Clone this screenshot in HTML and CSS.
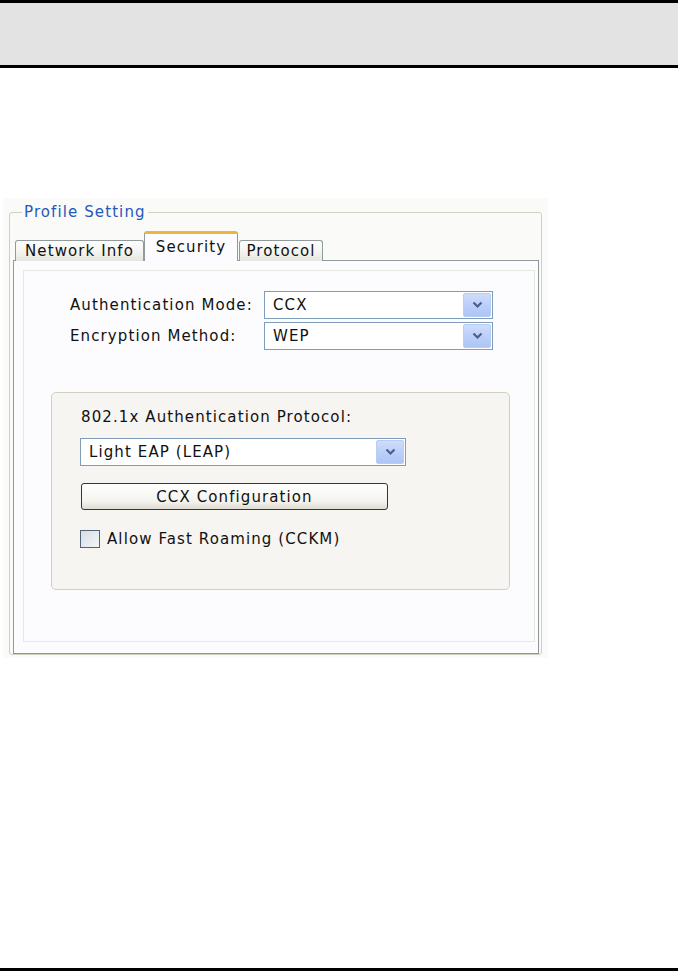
FILE: index.html
```html
<!DOCTYPE html>
<html>
<head>
<meta charset="utf-8">
<link rel="stylesheet" href="styles.css">
</head>
<body>
<div class="page">
  <div class="topbar"></div>
  <div class="shot">
    <div class="group">
      <div class="group-title">Profile Setting</div>
      <div class="tabs">
        <div class="tab tab-ni">Network Info</div>
        <div class="tab tab-sel">Security</div>
        <div class="tab tab-pr">Protocol</div>
      </div>
      <div class="panel">
        <div class="frame">
          <div class="form">
            <div class="label">Authentication Mode:</div>
            <div class="combo"><span class="combo-text">CCX</span><span class="arrow"><svg width="11" height="8" viewBox="0 0 11 8"><path d="M1.5 1.5 L5.5 5.5 L9.5 1.5" fill="none" stroke="#4a5f8c" stroke-width="2.2"/></svg></span></div>
            <div class="label">Encryption Method:</div>
            <div class="combo"><span class="combo-text">WEP</span><span class="arrow"><svg width="11" height="8" viewBox="0 0 11 8"><path d="M1.5 1.5 L5.5 5.5 L9.5 1.5" fill="none" stroke="#4a5f8c" stroke-width="2.2"/></svg></span></div>
          </div>
          <div class="inner">
            <div class="inner-label">802.1x Authentication Protocol:</div>
            <div class="combo combo-leap"><span class="combo-text">Light EAP (LEAP)</span><span class="arrow"><svg width="11" height="8" viewBox="0 0 11 8"><path d="M1.5 1.5 L5.5 5.5 L9.5 1.5" fill="none" stroke="#4a5f8c" stroke-width="2.2"/></svg></span></div>
            <div class="button">CCX Configuration</div>
            <div class="check-row"><span class="checkbox"></span><span class="check-label">Allow Fast Roaming (CCKM)</span></div>
          </div>
        </div>
      </div>
    </div>
  </div>
  <div class="footer"></div>
</div>
</body>
</html>
```
FILE: styles.css
```css
html, body {
  margin: 0;
  padding: 0;
  background: #ffffff;
}
.page {
  height: 971px;
  display: flex;
  flex-direction: column;
  font-family: "DejaVu Sans", sans-serif;
  font-size: 15px;
  letter-spacing: 1.1px;
  color: #111;
}
.topbar {
  height: 62px;
  border-top: 3px solid #000;
  border-bottom: 3px solid #000;
  background: #e3e3e3;
}
.shot {
  margin-top: 130px;
  margin-left: 3px;
  width: 533px;
  height: 443px;
  padding: 14px 6px 3px 6px;
  background: #fafaf8;
}
.group {
  position: relative;
  height: 443px;
  border: 1px solid #d0d0bf;
  border-radius: 3px;
  padding: 19px 2px 0 2px;
  box-sizing: border-box;
}
.group-title {
  position: absolute;
  top: -10px;
  left: 12px;
  padding: 0 2px;
  background: #fafaf8;
  color: #2558b8;
  line-height: 18px;
}
.tabs {
  display: flex;
  align-items: flex-end;
  margin-left: 3px;
  height: 29px;
  position: relative;
  z-index: 1;
  margin-bottom: -1px;
}
.tab {
  box-sizing: border-box;
  height: 21px;
  border: 1px solid #919b9c;
  border-bottom: none;
  border-radius: 3px 3px 0 0;
  background: linear-gradient(#fefefe, #f2f2ee 60%, #e6e6e0);
  display: flex;
  justify-content: center;
  align-items: flex-end;
  line-height: 18px;
  padding-bottom: 1px;
  white-space: nowrap;
}
.tab-ni { width: 129px; }
.tab-pr { width: 84px; margin-left: 1px; }
.tab-sel {
  width: 94px;
  height: 30px;
  background: #fcfcfe;
  border-top: 3px solid #f1b33a;
  align-items: flex-start;
  padding-top: 4px;
  margin-left: 0;
  height: 30px;
}
.panel {
  box-sizing: border-box;
  width: 526px;
  height: 394px;
  border: 1px solid #919b9c;
  border-right-color: #8c9495;
  border-bottom-color: #8c9495;
  background: #fcfcfe;
  padding: 9px 0 0 9px;
  margin-left: 1px;
}
.frame {
  box-sizing: border-box;
  width: 512px;
  height: 372px;
  border: 1px solid #e8e8e2;
  padding-top: 20px;
}
.form {
  display: grid;
  grid-template-columns: 194px 229px;
  grid-auto-rows: 28px;
  row-gap: 3px;
  margin-left: 46px;
  align-items: center;
}
.label {
  line-height: 18px;
  white-space: nowrap;
}
.combo {
  box-sizing: border-box;
  height: 28px;
  border: 1px solid #7f9db9;
  background: #fff;
  display: flex;
  align-items: center;
  justify-content: space-between;
  padding: 0 1px 0 8px;
}
.combo-text {
  line-height: 18px;
  white-space: nowrap;
}
.arrow {
  box-sizing: border-box;
  width: 28px;
  height: 24px;
  border: 1px solid #b9ccf5;
  border-radius: 2px;
  background: linear-gradient(#cfdcfb, #b8cdf8 60%, #aec5f6);
  display: flex;
  align-items: center;
  justify-content: center;
}
.inner {
  box-sizing: border-box;
  width: 459px;
  height: 198px;
  margin: 42px 0 0 27px;
  border: 1px solid #d0d0bf;
  border-radius: 5px;
  background: #f6f5f1;
  padding: 14px 0 0 29px;
}
.inner-label {
  line-height: 20px;
  white-space: nowrap;
}
.combo-leap {
  width: 326px;
  margin-top: 11px;
  margin-left: -1px;
}
.button {
  box-sizing: border-box;
  width: 307px;
  height: 27px;
  margin-top: 17px;
  border: 1px solid #1b3a5c;
  border-radius: 3px;
  background: linear-gradient(#ffffff, #f4f3ee 70%, #dedbd1);
  display: flex;
  align-items: center;
  justify-content: center;
  line-height: 18px;
}
.check-row {
  display: flex;
  align-items: center;
  margin-top: 20px;
  height: 18px;
}
.checkbox {
  box-sizing: border-box;
  width: 20px;
  height: 18px;
  border: 1px solid #4f6478;
  background: linear-gradient(135deg, #d6dde4, #f4f6f8);
  margin-left: -1px;
}
.check-label {
  margin-left: 7px;
  line-height: 18px;
  white-space: nowrap;
}
.footer {
  margin-top: auto;
  height: 3px;
  background: #000;
}
```
